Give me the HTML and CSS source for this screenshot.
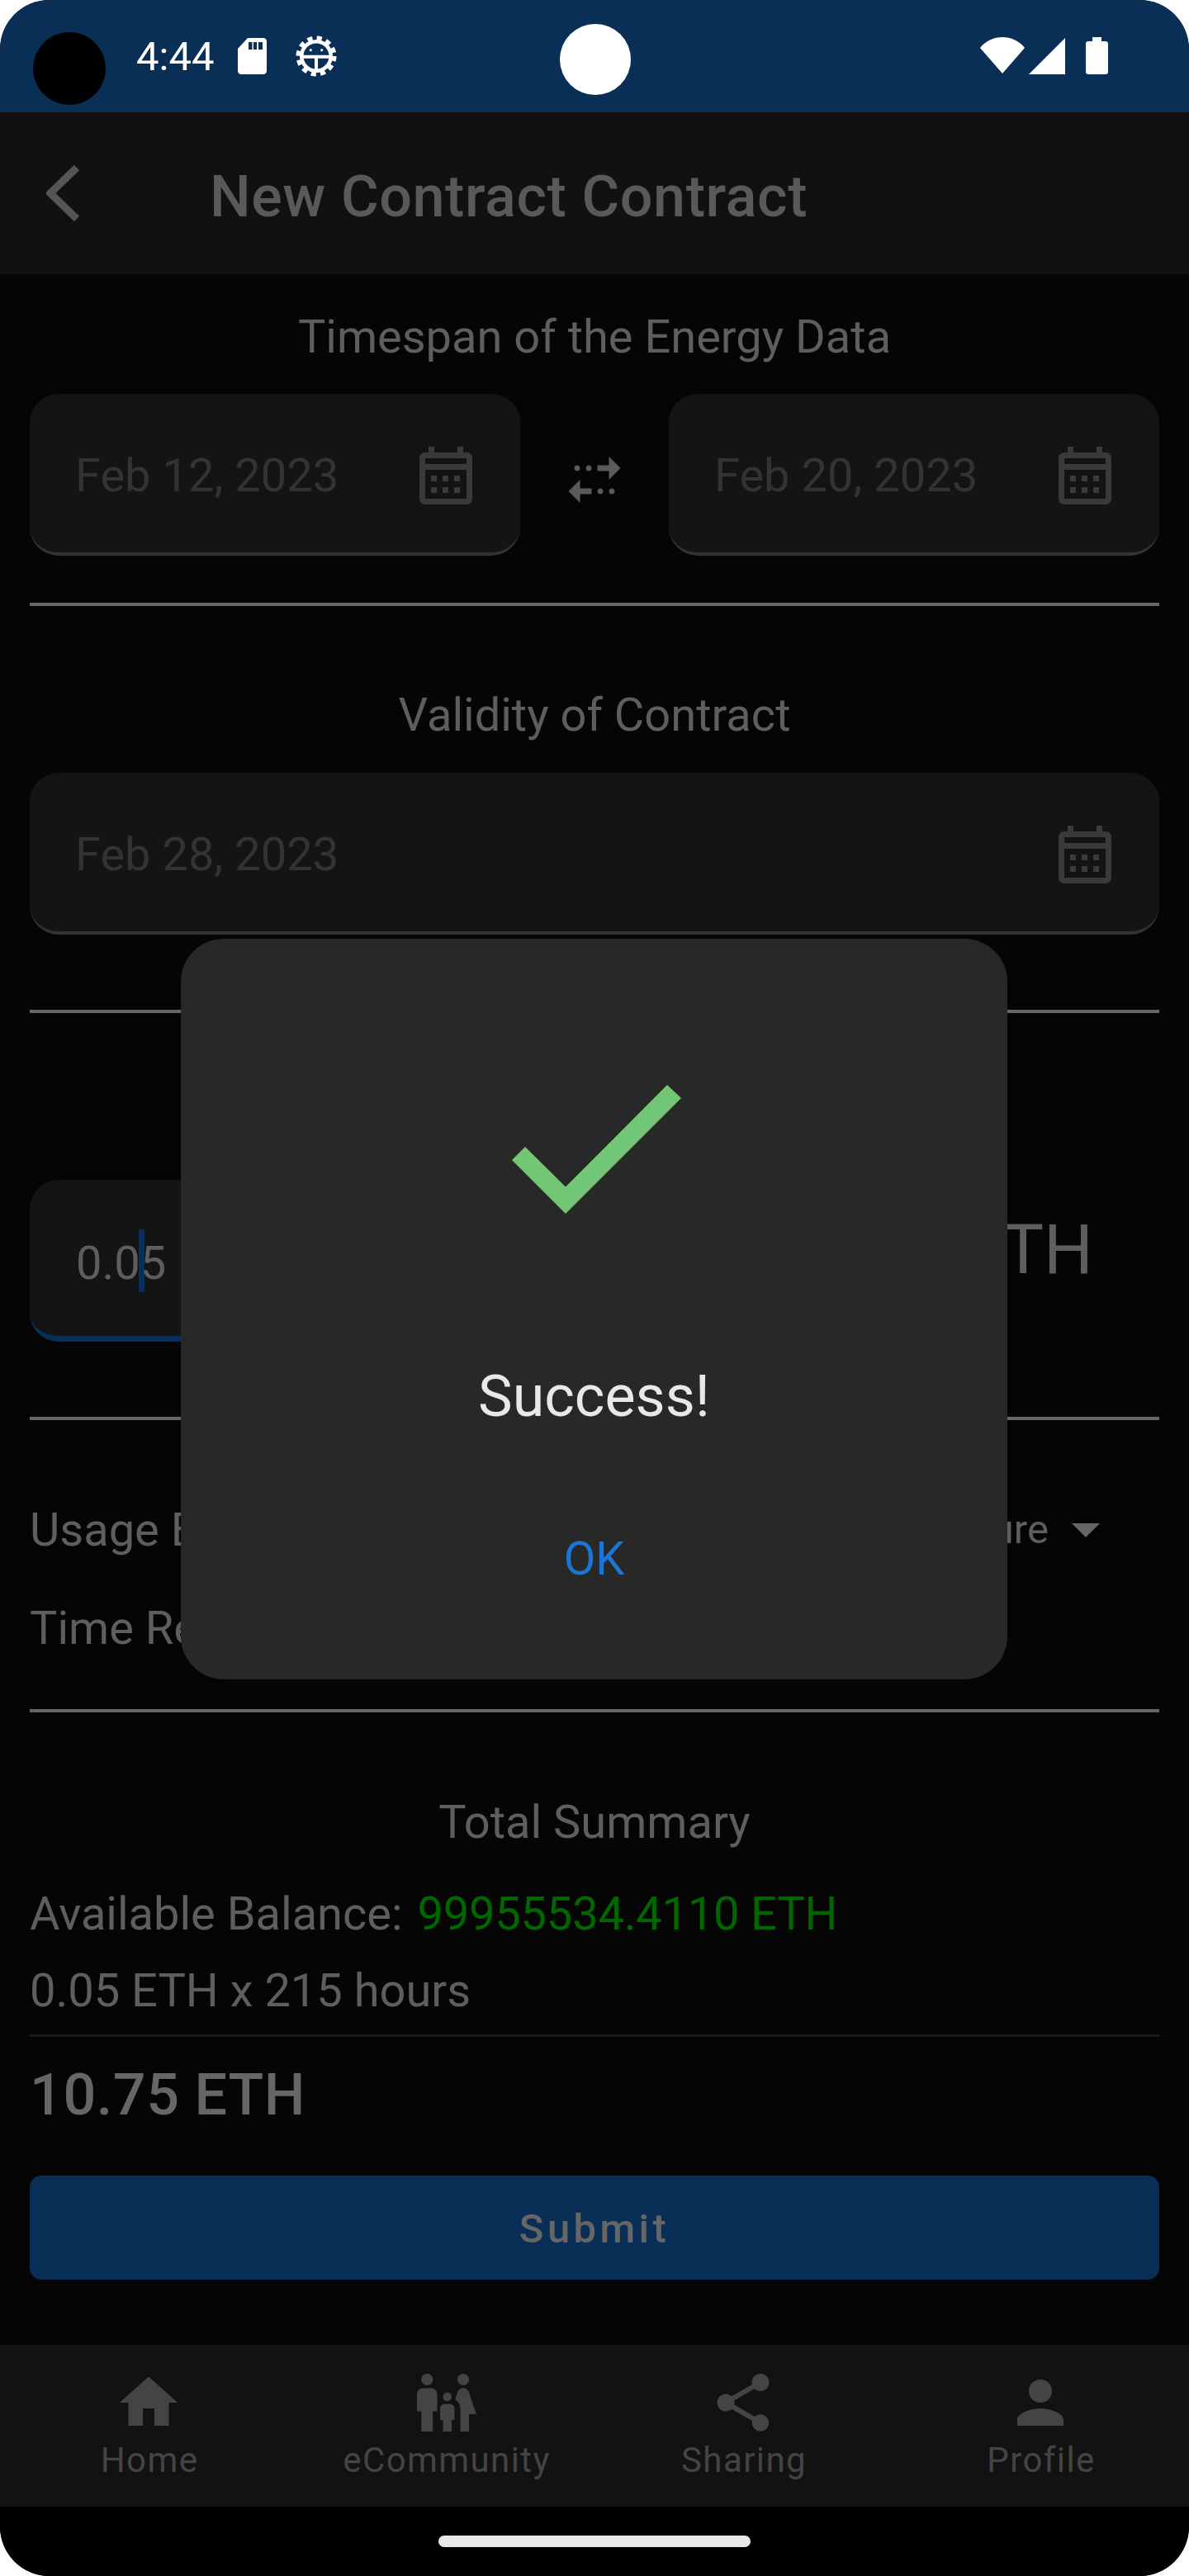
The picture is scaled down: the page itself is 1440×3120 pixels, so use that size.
FILE: index.html
```html
<!DOCTYPE html>
<html lang="en">
<head>
<meta charset="utf-8">
<title>New Contract Contract</title>
<link rel="stylesheet" href="styles.css">
</head>
<body>
<div class="phone">
  <header class="status">
    <span class="camera"></span>
    <span class="time">4:44</span>
    <svg class="ic-sd" viewBox="0 0 35 44"><path d="M12 0h19c2.200 0 4 1.800 4 4v36c0 2.200-1.800 4-4 4H4c-2.200 0-4-1.800-4-4V13zM13 5v9h4.500V5zM19 5v9h4V5zM25 5v9h5V5z" fill-rule="evenodd"/></svg>
    <svg class="ic-bug" viewBox="0 0 50 50">
      <circle cx="25" cy="25" r="20"/>
      <circle cx="25" cy="25" r="21.500" class="bug-teeth"/>
      <circle cx="25" cy="25" r="15.500" class="bug-hole"/>
      <path d="M9 25.700h32M25 25.700v16" class="bug-line"/>
      <circle cx="18.300" cy="17.700" r="1.600"/><circle cx="31.700" cy="17.700" r="1.600"/>
    </svg>
    <span class="status-right">
      <svg class="ic-wifi" viewBox="0 0 54 44"><path d="M27 44 0 13C7 4 17 0 27 0s20 4 27 13z"/></svg>
      <svg class="ic-signal" viewBox="0 0 44 44"><path d="M44 0v44H0z"/></svg>
      <svg class="ic-batt" viewBox="0 0 27 45"><path d="M8 0h11v5h5c1.700 0 3 1.300 3 3v34c0 1.700-1.300 3-3 3H3c-1.700 0-3-1.300-3-3V8c0-1.700 1.300-3 3-3h5z"/></svg>
    </span>
    <span class="dot"></span>
  </header>

  <div class="appbar">
    <svg class="ic-back" viewBox="0 0 41 68"><path d="M37 3 5 34l32 31" class="back-line"/></svg>
    <h1 class="title">New Contract Contract</h1>
  </div>

  <main class="content">
    <section class="block block-time">
      <h2 class="heading">Timespan of the Energy Data</h2>
      <div class="date-row">
        <div class="field date">
          <span>Feb 12, 2023</span>
          <svg class="ic-cal" viewBox="0 0 64 70"><path fill-rule="evenodd" d="M11 0h7v7h28V0h7v7h4c3.900 0 7 3.100 7 7v49c0 3.900-3.100 7-7 7H7c-3.900 0-7-3.100-7-7V14c0-3.900 3.100-7 7-7h4zM7 14v7h50v-7zM7 28v35h50V28zM14 35h7v7h-7zM28 35h7v7h-7zM42 35h7v7h-7zM14 49h7v7h-7zM28 49h7v7h-7zM42 49h7v7h-7z"/></svg>
        </div>
        <svg class="ic-swap" viewBox="0 0 24 24"><path d="M17 4l4 4-4 4V9h-4V7h4V4zm-7 3c-.55 0-1 .45-1 1s.45 1 1 1 1-.45 1-1-.45-1-1-1zm-4 0c-.55 0-1 .45-1 1s.45 1 1 1 1-.45 1-1-.45-1-1-1zm1 10h4v-2H7v-3l-4 4 4 4v-3zm7 0c.55 0 1-.45 1-1s-.45-1-1-1-1 .45-1 1 .45 1 1 1zm4 0c.55 0 1-.45 1-1s-.45-1-1-1-1 .45-1 1 .45 1 1 1z"/></svg>
        <div class="field date">
          <span>Feb 20, 2023</span>
          <svg class="ic-cal" viewBox="0 0 64 70"><path fill-rule="evenodd" d="M11 0h7v7h28V0h7v7h4c3.900 0 7 3.100 7 7v49c0 3.900-3.100 7-7 7H7c-3.900 0-7-3.100-7-7V14c0-3.900 3.100-7 7-7h4zM7 14v7h50v-7zM7 28v35h50V28zM14 35h7v7h-7zM28 35h7v7h-7zM42 35h7v7h-7zM14 49h7v7h-7zM28 49h7v7h-7zM42 49h7v7h-7z"/></svg>
        </div>
      </div>
    </section>

    <section class="block block-valid">
      <h2 class="heading">Validity of Contract</h2>
      <div class="field date full">
        <span>Feb 28, 2023</span>
        <svg class="ic-cal" viewBox="0 0 64 70"><path fill-rule="evenodd" d="M11 0h7v7h28V0h7v7h4c3.900 0 7 3.100 7 7v49c0 3.900-3.100 7-7 7H7c-3.900 0-7-3.100-7-7V14c0-3.900 3.100-7 7-7h4zM7 14v7h50v-7zM7 28v35h50V28zM14 35h7v7h-7zM28 35h7v7h-7zM42 35h7v7h-7zM14 49h7v7h-7zM28 49h7v7h-7zM42 49h7v7h-7z"/></svg>
      </div>
    </section>

    <section class="block block-price">
      <div class="price-row">
        <div class="field price">
          <span class="value">0.0<i class="caret"></i>5</span>
        </div>
        <span class="unit">ETH</span>
      </div>
    </section>

    <section class="block block-options">
      <div class="opt-row">
        <span>Usage Based</span>
        <span class="select"><span class="select-text">Measure</span><svg class="ic-drop" viewBox="0 0 34 17"><path d="M0 0h34L17 17z"/></svg></span>
      </div>
      <div class="opt-row opt-second"><span>Time Remaining</span></div>
    </section>

    <section class="summary">
      <h2 class="heading">Total Summary</h2>
      <p class="line balance">Available Balance: <span class="green">99955534.4110 ETH</span></p>
      <p class="line calc">0.05 ETH x 215 hours</p>
      <hr class="thin">
      <p class="total">10.75 ETH</p>
      <button class="submit" type="button">Submit</button>
    </section>
  </main>

  <nav class="nav">
    <div class="nav-item">
      <svg viewBox="0 0 24 24"><path d="M10 20v-6h4v6h5v-8h3L12 3 2 12h3v8z"/></svg>
      <span>Home</span>
    </div>
    <div class="nav-item">
      <svg viewBox="0 0 24 24"><path d="M16 4c0-1.110.89-2 2-2s2 .89 2 2-.89 2-2 2-2-.89-2-2zm4 18v-6h2.500l-2.540-7.630C19.680 7.550 18.920 7 18.060 7h-.12c-.86 0-1.630.55-1.900 1.370l-.86 2.580c1.080.6 1.820 1.730 1.820 3.050v8h4zm-7.500-10.500c.83 0 1.500-.67 1.500-1.500s-.67-1.500-1.500-1.500S11 9.170 11 10s.67 1.500 1.500 1.500zM5.500 6c1.110 0 2-.89 2-2s-.89-2-2-2-2 .89-2 2 .89 2 2 2zm2 16v-7H9V9c0-1.100-.9-2-2-2H4c-1.100 0-2 .9-2 2v6h1.500v7h4zm6.500 0v-4h1v-4c0-.82-.68-1.500-1.500-1.500h-2c-.82 0-1.500.68-1.500 1.500v4h1v4h3z"/></svg>
      <span>eCommunity</span>
    </div>
    <div class="nav-item">
      <svg viewBox="0 0 24 24"><path d="M18 16.080c-.76 0-1.440.3-1.960.77L8.910 12.700c.05-.23.09-.46.09-.7s-.04-.47-.09-.7l7.050-4.110c.54.5 1.250.81 2.040.81 1.660 0 3-1.340 3-3s-1.340-3-3-3-3 1.340-3 3c0 .24.04.47.09.7L8.040 9.810C7.500 9.310 6.790 9 6 9c-1.660 0-3 1.340-3 3s1.340 3 3 3c.79 0 1.500-.31 2.040-.81l7.120 4.160c-.05.21-.08.43-.08.65 0 1.610 1.310 2.920 2.920 2.920 1.610 0 2.920-1.310 2.920-2.920s-1.310-2.920-2.920-2.920z"/></svg>
      <span>Sharing</span>
    </div>
    <div class="nav-item">
      <svg viewBox="0 0 24 24"><path d="M12 12c2.210 0 4-1.790 4-4s-1.790-4-4-4-4 1.790-4 4 1.790 4 4 4zm0 2c-2.670 0-8 1.340-8 4v2h16v-2c0-2.660-5.330-4-8-4z"/></svg>
      <span>Profile</span>
    </div>
  </nav>

  <footer class="gesture"><span class="handle"></span></footer>

  <div class="dialog">
    <svg class="ic-check" viewBox="0 0 205 156"><path d="M0 91 16 75 65 123.500 188 0 205 16 65 156z"/></svg>
    <p class="dialog-text">Success!</p>
    <span class="dialog-ok">OK</span>
  </div>
</div>
</body>
</html>
```

FILE: styles.css
```css
* { box-sizing: border-box; }
html, body { margin: 0; padding: 0; background: #fff; }
body { font-family: Roboto, "Noto Sans", sans-serif; }
.phone {
  position: relative;
  width: 1440px;
  height: 3120px;
  border-radius: 60px;
  overflow: hidden;
  background: #050505;
  display: flex;
  flex-direction: column;
  color: #5e5e5e;
  font-size: 56px;
}
.status {
  position: relative;
  height: 136px;
  flex: none;
  background: #0a2f56;
  display: flex;
  align-items: flex-start;
  color: #fff;
  fill: #fff;
}
.camera {
  position: absolute;
  left: 40px;
  top: 39px;
  width: 88px;
  height: 88px;
  border-radius: 50%;
  background: #000;
}
.dot {
  position: absolute;
  left: 678px;
  top: 29px;
  width: 86px;
  height: 86px;
  border-radius: 50%;
  background: #fff;
}
.time {
  margin: 40px 0 0 165px;
  font-size: 49px;
  line-height: 58px;
}
.ic-sd { width: 35px; height: 44px; margin: 46px 0 0 29px; }
.ic-bug { width: 50px; height: 50px; margin: 43px 0 0 35px; }
.bug-teeth { fill: none; stroke: #fff; stroke-width: 6; stroke-dasharray: 6 5.260; }
.bug-hole { fill: #0a2f56; }
.bug-line { fill: none; stroke: #fff; stroke-width: 4; }
.status-right { margin-left: auto; margin-right: 98px; display: flex; align-items: flex-start; padding-top: 45px; }
.ic-wifi { width: 54px; height: 44px; }
.ic-signal { width: 44px; height: 44px; margin: 1px 0 0 5px; }
.ic-batt { width: 27px; height: 45px; margin-left: 25px; }

.appbar {
  height: 196px;
  flex: none;
  background: #111;
  display: flex;
  align-items: flex-start;
}
.ic-back { width: 41px; height: 68px; margin: 64px 0 0 56px; flex: none; }
.back-line { fill: none; stroke: #555; stroke-width: 9; }
.title {
  margin: 61px 0 0 157px;
  font-size: 70px;
  font-weight: 500;
  line-height: 82px;
  letter-spacing: .6px;
  color: #595959;
}
.content { flex: 1; display: flex; flex-direction: column; padding: 0 36px; }
.block { border-bottom: 4px solid #666; }
.heading {
  margin: 0;
  text-align: center;
  font-size: 56px;
  font-weight: 400;
  line-height: 66px;
}
.block-time { padding-top: 43px; height: 402px; }
.block-valid { padding-top: 99px; height: 493px; }
.block-price { height: 493px; padding-top: 202px; }
.block-options { height: 354px; padding-top: 100px; }
.date-row { display: flex; align-items: center; justify-content: space-between; margin-top: 36px; }
.field {
  background: #141414;
  border-radius: 35px;
  display: flex;
  align-items: center;
  height: 196px;
  border-bottom: 4px solid #333;
}
.date { width: 594px; padding: 6px 58px 0 55px; justify-content: space-between; color: #333; }
.full { width: 100%; margin-top: 37px; }
.ic-cal { width: 64px; height: 70px; fill: #3a3a3a; flex: none; }
.ic-swap { width: 84px; height: 84px; fill: #5a5a5a; flex: none; margin-top: 11px; }
.price-row { display: flex; align-items: flex-start; justify-content: space-between; padding-right: 80px; }
.price { width: 1000px; padding: 6px 0 0 56px; border-bottom: 7px solid #0a2f56; }
.caret {
  display: inline-block;
  width: 7px;
  height: 76px;
  margin: 0 -5.500px 0 -1.500px;
  vertical-align: -16px;
  background: #0a2f56;
}
.unit { font-size: 84px; line-height: 98px; margin-top: 36px; }
.opt-row { display: flex; justify-content: space-between; align-items: center; line-height: 66px; }
.opt-second { margin-top: 53px; }
.select { display: flex; align-items: center; padding-right: 72px; }
.select-text { font-size: 49px; }
.ic-drop { width: 34px; height: 17px; margin-left: 28px; fill: #666; }
.summary { padding-top: 100px; }
.line { margin: 0; line-height: 66px; }
.balance { margin-top: 45px; }
.calc { margin-top: 27px; }
.green { color: #006600; margin-left: 4px; letter-spacing: -.2px; }
.thin { border: 0; height: 3px; margin: 20px 0 0; background: #1a1a1a; }
.total { margin: 29px 0 0; font-size: 70px; font-weight: 500; line-height: 82px; letter-spacing: .6px; color: #666; }
.submit {
  display: block;
  width: 100%;
  height: 126px;
  margin-top: 57px;
  padding-top: 4px;
  border: 0;
  border-radius: 14px;
  background: #0a2f56;
  color: #666;
  font: 500 49px Roboto, sans-serif;
  letter-spacing: 4.400px;
}
.nav {
  height: 196px;
  flex: none;
  background: #121212;
  display: grid;
  grid-template-columns: repeat(4, 360px);
  color: #444;
  fill: #444;
}
.nav-item { display: flex; flex-direction: column; align-items: center; padding-top: 28px; }
.nav-item svg { width: 84px; height: 84px; }
.nav-item span { font-size: 42px; line-height: 50px; margin-top: 3px; padding-left: 2px; letter-spacing: 1.400px; }
.gesture { height: 84px; flex: none; background: #000; display: flex; justify-content: center; padding-top: 35px; }
.handle { width: 378px; height: 14px; border-radius: 7px; background: #e8e8e8; }
.dialog {
  position: absolute;
  left: 219px;
  top: 1137px;
  width: 1001px;
  height: 897px;
  border-radius: 52px;
  background: #282828;
  display: flex;
  flex-direction: column;
  align-items: center;
}
.ic-check { width: 205px; height: 156px; fill: #72c674; margin: 177px 0 0 5px; flex: none; }
.dialog-text { margin: 180px 0 0; font-size: 70px; line-height: 82px; color: #e8e8e8; }
.dialog-ok { margin-top: 123px; font-size: 56px; line-height: 66px; color: #1976d2; }
```
